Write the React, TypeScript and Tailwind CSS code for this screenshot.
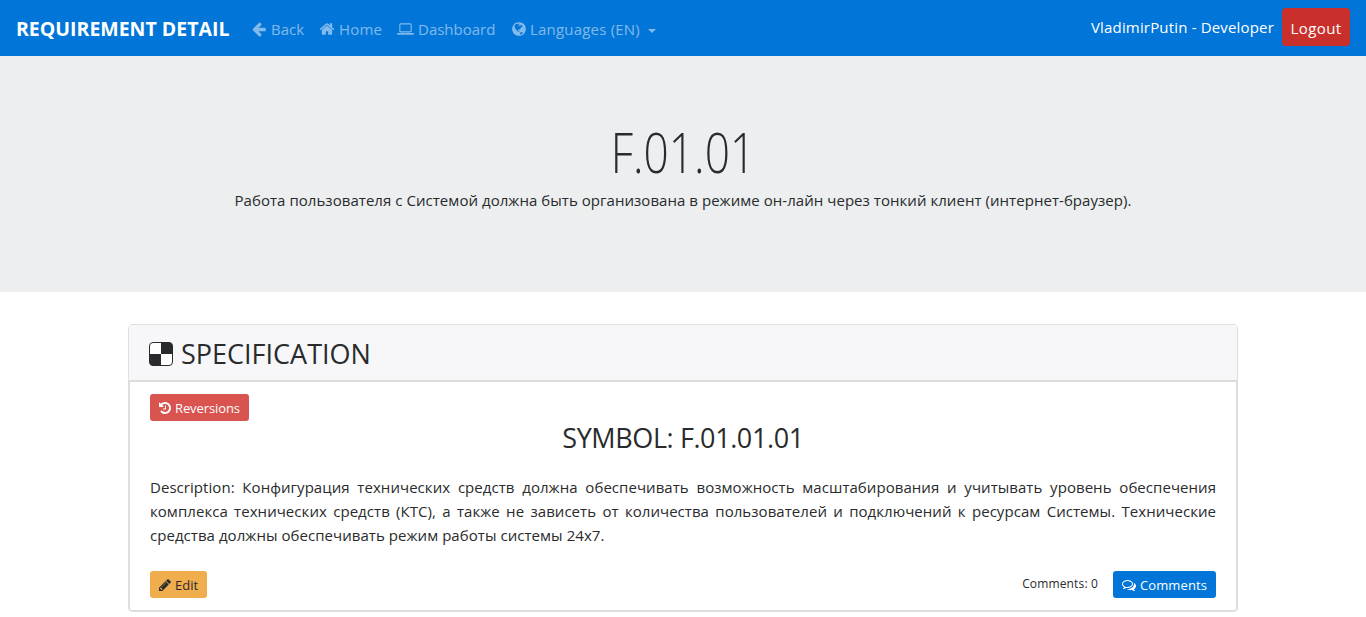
import type { ReactNode } from 'react';

const paths = {
  back: 'M1664 896v128q0 53-32.5 90.5t-84.5 37.5h-704l293 294q38 36 38 90t-38 90l-75 76q-37 37-90 37-52 0-91-37l-651-652q-37-37-37-90 0-52 37-91l651-650q38-38 91-38 52 0 90 38l75 74q38 38 38 91t-38 91l-293 293h704q52 0 84.5 37.5t32.5 90.5z',
  home: 'M1472 992v480q0 26-19 45t-45 19h-384v-384h-256v384h-384q-26 0-45-19t-19-45v-480q0-1 .5-3t.5-3l575-474 575 474q1 2 1 6zm223-69l-62 74q-8 9-21 11h-3q-13 0-21-7l-692-577-692 577q-12 8-24 7-13-2-21-11l-62-74q-8-10-7-23.5t11-21.5l719-599q32-26 76-26t76 26l244 204v-195q0-14 9-23t23-9h192q14 0 23 9t9 23v408l219 182q10 8 11 21.5t-7 23.5z',
  laptop: 'M416 1280q-66 0-113-47t-47-113v-704q0-66 47-113t113-47h1088q66 0 113 47t47 113v704q0 66-47 113t-113 47h-1088zm-32-864v704q0 13 9.5 22.5t22.5 9.5h1088q13 0 22.5-9.5t9.5-22.5v-704q0-13-9.5-22.5t-22.5-9.5h-1088q-13 0-22.5 9.5t-9.5 22.5zm1376 928h160v96q0 40-47 68t-113 28h-1600q-66 0-113-28t-47-68v-96h1760zm-720 96q16 0 16-16t-16-16h-160q-16 0-16 16t16 16h160z',
  globe: 'M896 128q209 0 385.5 103t279.5 279.5 103 385.5-103 385.5-279.5 279.5-385.5 103-385.5-103-279.5-279.5-103-385.5 103-385.5 279.5-279.5 385.5-103zm274 521q-2 1-9.5 9.5t-13.5 9.5q2 0 4.5-5t5-11 3.5-7q6-7 22-15 14-6 52-12 34-8 51 11-2-2 9.5-13t14.5-12q3-2 15-4.5t15-7.5l2-22q-12 1-17.5-7t-6.5-21q0 2-6 8 0-7-4.5-8t-11.5 1-9 1q-10-3-15-7.5t-8-16.5-4-15q-2-5-9.5-11t-9.5-10q-1-2-2.5-5.5t-3-6.5-4-5.5-5.5-2.5-7 5-7.5 10-4.5 5q-3-2-6-1.5t-4.5 1-4.5 3-5 3.5q-3 2-8.5 3t-8.5 2q15-5-1-11-10-4-16-3 9-4 7.5-12t-8.5-14h5q-1-4-8.5-8.5t-17.5-8.5-13-6q-8-5-34-9.5t-33-.5q-5 6-4.5 10.5t4 14 3.5 12.5q1 6-5.5 13t-6.5 12q0 7 14 15.5t10 21.5q-3 8-16 16t-16 12q-5 8-1.5 18.5t10.5 16.5q2 2 1.5 4t-3.5 4.5-5.5 4-6.5 3.5l-3 2q-11 5-20.5-6t-13.5-26q-7-25-16-30-23-8-29 1-5-13-41-26-25-9-58-4 6-1 0-15-7-15-19-12 3-6 4-17.5t1-13.5q3-13 12-23 1-1 7-8.5t9.5-13.5.5-6q35 4 50-11 5-5 11.5-17t10.5-17q9-6 14-5.5t14.5 5.5 14.5 5q14 1 15.5-11t-7.5-20q12 1 3-17-4-7-8-9-12-4-27 5-8 4 2 8-1-1-9.5 10.5t-16.5 17.5-16-5q-1-1-5.5-13.5t-9.5-13.5q-8 0-16 15 3-8-11-15t-24-8q19-12-8-27-7-4-20.5-5t-19.5 4q-5 7-5.5 11.5t5 8 10.5 5.5 11.5 4 8.5 3q14 10 8 14-2 1-8.5 3.5t-11.5 4.5-6 4q-3 4 0 14t-2 14q-5-5-9-17.5t-7-16.5q7 9-25 6l-10-1q-4 0-16 2t-20.5 1-13.5-8q-4-8 0-20 1-4 4-2-4-3-11-9.5t-10-8.5q-46 15-94 41 6 1 12-1 5-2 13-6.5t10-5.5q34-14 42-7l5-5q14 16 20 25-7-4-30-1-20 6-22 12 7 12 5 18-4-3-11.5-10t-14.5-11-15-5q-16 0-22 1-146 80-235 222 7 7 12 8 4 1 5 9t2.5 11 11.5-3q9 8 3 19 1-1 44 27 19 17 21 21 3 11-10 18-1-2-9-9t-9-4q-3 5 .5 18.5t10.5 12.5q-7 0-9.5 16t-2.5 35.5-1 23.5l2 1q-3 12 5.5 34.5t21.5 19.5q-13 3 20 43 6 8 8 9 3 2 12 7.5t15 10 10 10.5q4 5 10 22.5t14 23.5q-2 6 9.5 20t10.5 23q-1 0-2.5 1t-2.5 1q3 7 15.5 14t15.5 13q1 3 2 10t3 11 8 2q2-20-24-62-15-25-17-29-3-5-5.5-15.5t-4.5-14.5q2 0 6 1.5t8.5 3.5 7.5 4 2 3q-3 7 2 17.5t12 18.5 17 19 12 13q6 6 14 19.5t0 13.5q9 0 20 10.5t17 19.5q5 8 8 26t5 24q2 7 8.5 13.5t12.5 9.5l16 8 13 7q5 2 18.5 10.5t21.5 11.5q10 4 16 4t14.5-2.5 13.5-3.5q15-2 29 15t21 21q36 19 55 11-2 1 .5 7.5t8 15.5 9 14.5 5.5 8.5q5 6 18 15t18 15q6-4 7-9-3 8 7 20t18 10q14-3 14-32-31 15-49-18 0-1-2.5-5.5t-4-8.5-2.5-8.5 0-7.5 5-3q9 0 10-3.5t-2-12.5-4-13q-1-8-11-20t-12-15q-5 9-16 8t-16-9q0 1-1.5 5.5t-1.5 6.5q-13 0-15-1 1-3 2.5-17.5t3.5-22.5q1-4 5.5-12t7.5-14.5 4-12.5-4.5-9.5-17.5-2.5q-19 1-26 20-1 3-3 10.5t-5 11.5-9 7q-7 3-24 2t-24-5q-13-8-22.5-29t-9.5-37q0-10 2.5-26.5t3-25-5.5-24.5q3-2 9-9.5t10-10.5q2-1 4.5-1.5t4.5 0 4-1.5 3-6q-1-1-4-3-3-3-4-3 7 3 28.5-1.5t27.5 1.5q15 11 22-2 0-1-2.5-9.5t-.5-13.5q5 27 29 9 3 3 15.5 5t17.5 5q3 2 7 5.5t5.5 4.5 5-.5 8.5-6.5q10 14 12 24 11 40 19 44 7 3 11 2t4.5-9.5 0-14-1.5-12.5l-1-8v-18l-1-8q-15-3-18.5-12t1.5-18.5 15-18.5q1-1 8-3.5t15.5-6.5 12.5-8q21-19 15-35 7 0 11-9-1 0-5-3t-7.5-5-4.5-2q9-5 2-16 5-3 7.5-11t7.5-10q9 12 21 2 7-8 1-16 5-7 20.5-10.5t18.5-9.5q7 2 8-2t1-12 3-12q4-5 15-9t13-5l17-11q3-4 0-4 18 2 31-11 10-11-6-20 3-6-3-9.5t-15-5.5q3-1 11.5-.5t10.5-1.5q15-10-7-16-17-5-43 12zm-163 877q206-36 351-189-3-3-12.5-4.5t-12.5-3.5q-18-7-24-8 1-7-2.5-13t-8-9-12.5-8-11-7q-2-2-7-6t-7-5.5-7.5-4.5-8.5-2-10 1l-3 1q-3 1-5.5 2.5t-5.5 3-4 3 0 2.5q-21-17-36-22-5-1-11-5.5t-10.5-7-10-1.5-11.5 7q-5 5-6 15t-2 13q-7-5 0-17.5t2-18.5q-3-6-10.5-4.5t-12 4.5-11.5 8.5-9 6.5-8.5 5.5-8.5 7.5q-3 4-6 12t-5 11q-2-4-11.5-6.5t-9.5-5.5q2 10 4 35t5 38q7 31-12 48-27 25-29 40-4 22 12 26 0 7-8 20.5t-7 21.5q0 6 2 16z',
  pencil: 'M491 1536l91-91-235-235-91 91v107h128v128h107zm523-928q0-22-22-22-10 0-17 7l-542 542q-7 7-7 17 0 22 22 22 10 0 17-7l542-542q7-7 7-17zm-54-192l416 416-832 832h-416v-416zm683 96q0 53-37 90l-166 166-416-416 166-165q36-38 90-38 53 0 91 38l235 234q37 39 37 91z',
  history: 'M1664 896q0 156-61 298t-164 245-245 164-298 61q-172 0-327-72.5t-264-204.5q-7-10-6.5-22.5t8.5-20.5l137-138q10-9 25-9 16 2 23 12 73 95 179 147t225 52q104 0 198.5-40.5t163.5-109.5 109.5-163.5 40.5-198.5-40.5-198.5-109.5-163.5-163.5-109.5-198.5-40.5q-98 0-188 35.5t-160 101.5l137 138q31 30 14 69-17 40-59 40h-448q-26 0-45-19t-19-45v-448q0-42 40-59 39-17 69 14l130 129q107-101 244.5-156.5t284.5-55.5q156 0 298 61t245 164 164 245 61 298zm-640-288v448q0 14-9 23t-23 9h-320q-14 0-23-9t-9-23v-64q0-14 9-23t23-9h224v-352q0-14 9-23t23-9h64q14 0 23 9t9 23z',
  comments: 'M704 384q-153 0-286 52t-211.5 141-78.5 191q0 82 53 158t149 132l97 56-35 84q34-20 62-39l44-31 53 10q78 14 153 14 153 0 286-52t211.5-141 78.5-191-78.5-191-211.5-141-286-52zm0-128q191 0 353.5 68.5t256.5 186.5 94 257-94 257-256.5 186.5-353.5 68.5q-86 0-176-16-124 88-278 128-36 9-86 16h-3q-11 0-20.5-8t-11.5-21q-1-3-1-6.5t.5-6.5 2-6l2.5-5 3.5-5.5 4-5 4.5-5 4-4.5q5-6 23-25t26-29.5 22.5-29 25-38.5 20.5-44q-124-72-195-177t-71-224q0-139 94-257t256.5-186.5 353.5-68.5zm822 1169q10 24 20.5 44t25 38.5 22.5 29 26 29.5 23 25q1 1 4 4.5t4.5 5 4 5 3.5 5.5l2.5 5 2 6 .5 6.5-1 6.5q-3 14-13 22t-22 7q-50-7-86-16-154-40-278-128-90 16-176 16-271 0-472-132 58 4 88 4 161 0 309-45t264-129q125-92 192-212t67-254q0-77-23-152 129 71 204 178t75 230q0 120-71 224.5t-195 176.5z',
};

function Icon({ d, box = '0 0 1792 1792', className }: { d: string; box?: string; className: string }) {
  return (
    <svg viewBox={box} fill="currentColor" className={`shrink-0 ${className}`} aria-hidden="true">
      <path d={d} />
    </svg>
  );
}

function NavLink({ icon, className, children }: { icon: ReactNode; className: string; children: ReactNode }) {
  return (
    <a href="#" className={`flex items-center whitespace-nowrap text-white/50 ${className}`}>
      {icon}
      {children}
    </a>
  );
}

export default function App() {
  return (
    <div className="h-[617px] overflow-hidden bg-white font-['Open_Sans',sans-serif] text-[15px] leading-6 text-[#292b2c]">
      <nav className="flex h-14 items-center bg-[#0275d8] pr-4 pl-4">
        <a href="#" className="mt-0.5 w-[213px] text-[19.5px] leading-[30px] font-bold whitespace-nowrap text-white">REQUIREMENT DETAIL</a>
        <div className="mt-px ml-[23px] flex flex-1 items-center">
          <NavLink className="w-[67px]" icon={<Icon d={paths.back} className="-ml-px mr-1 size-4" />}>Back</NavLink>
          <NavLink className="w-[78px] tracking-[0.15px]" icon={<Icon d={paths.home} className="mr-1 size-4" />}>Home</NavLink>
          <NavLink className="w-[115px]" icon={<Icon d={paths.laptop} box="0 0 1920 1792" className="mr-1 h-4 w-[17px]" />}>Dashboard</NavLink>
          <NavLink className="tracking-[0.2px]" icon={<Icon d={paths.globe} className="-ml-px mr-[3px] size-4" />}>
            Languages (EN)
            <span className="mt-1 ml-2 border-x-[4.8px] border-t-[4.8px] border-x-transparent border-t-current" />
          </NavLink>
        </div>
        <span className="mr-2 mb-0.5 whitespace-nowrap tracking-[0.17px] text-white">VladimirPutin - Developer</span>
        <a href="#" className="mb-[2px] flex h-[38px] w-[68px] items-center justify-center rounded bg-[#c9302c] pt-px tracking-[0.4px] text-white">Logout</a>
      </nav>

      <header className="h-[236px] bg-[#eceeef] pt-16 text-center">
        <h1 className="scale-x-[0.79] text-[56px] leading-[62px] font-light">F.01.01</h1>
        <p className="mt-[6px] tracking-[0.046px] whitespace-nowrap">Работа пользователя с Системой должна быть организована в режиме он-лайн через тонкий клиент (интернет-браузер).</p>
      </header>

      <main className="mx-auto mt-8 w-[1110px]">
        <section className="flex h-[288px] flex-col rounded-[4px] border border-[#dfdfdf]">
          <h2 className="flex h-[55px] items-center bg-[#f7f7f9] pl-5 text-[27px] leading-[31px]">
            <svg viewBox="0 0 24 24" className="mt-[3px] mr-2 size-6 shrink-0" aria-hidden="true">
              <rect x=".5" y=".5" width="23" height="23" rx="3.5" fill="#fff" stroke="#292b2c" />
              <path d="M12 .5h8a3.5 3.5 0 0 1 3.5 3.5v8H12zM12 12v11.5H4A3.5 3.5 0 0 1 .5 20v-8z" fill="#292b2c" />
            </svg>
            <span className="mt-px">SPECIFICATION</span>
          </h2>
          <div className="flex flex-1 flex-col rounded-b-[3px] border-t-2 border-r border-b border-l border-[#dcdcdd] px-5 pt-3">
            <button className="flex h-[27px] w-[99px] items-center rounded-[3px] bg-[#d9534f] pl-2 text-[13px] text-white">
              <Icon d={paths.history} className="mr-[3px] size-[14px]" />
              <span className="mt-px tracking-[-0.1px]">Reversions</span>
            </button>
            <h3 className="mt-px mb-px text-center text-[27px] leading-[31px] tracking-[-0.4px]">SYMBOL: F.01.01.01</h3>
            <p className="mt-[21px] text-justify tracking-[0.05px]">
              Description: Конфигурация технических средств должна обеспечивать возможность масштабирования и учитывать уровень обеспечения комплекса технических средств (КТС), а также не зависеть от количества пользователей и подключений к ресурсам Системы. Технические средства должны обеспечивать режим работы системы 24х7.
            </p>
            <div className="mt-6 flex h-[27px] items-center">
              <button className="flex h-[27px] w-[57px] items-center rounded-[3px] bg-[#f0ad4e] pl-2 text-[13px]">
                <Icon d={paths.pencil} className="mr-[3px] size-[14px]" />
                <span className="mt-px">Edit</span>
              </button>
              <span className="mr-[15px] mb-px ml-auto text-[12px] leading-5 tracking-[0.15px] whitespace-nowrap">Comments: 0</span>
              <button className="flex h-[27px] w-[103px] items-center rounded-[3px] bg-[#0275d8] pl-[9px] text-[13px] text-white">
                <Icon d={paths.comments} className="mr-1 size-[14px]" />
                <span className="mt-px tracking-[0.1px]">Comments</span>
              </button>
            </div>
          </div>
        </section>
      </main>
    </div>
  );
}
